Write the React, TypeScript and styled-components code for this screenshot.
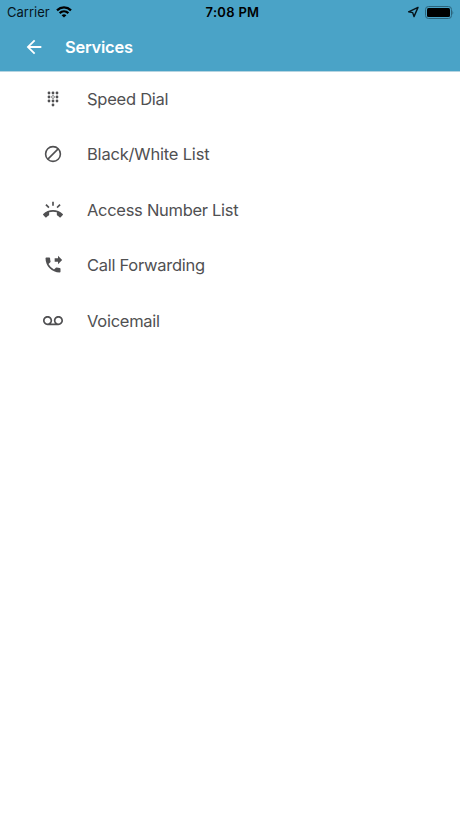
import React from 'react';
import styled, { createGlobalStyle } from 'styled-components';
import { MdArrowBack, MdRingVolume, MdPhoneForwarded, MdVoicemail } from 'react-icons/md';

const GlobalStyle = createGlobalStyle`
  * { box-sizing: border-box; }
  body { margin: 0; background: #fff; font-family: Inter, "Liberation Sans", sans-serif; }
`;

const Screen = styled.div`
  min-height: 100vh;
  background: #fff;
`;

const Header = styled.header`
  height: 71px;
  background: #4aa3c7;
  box-shadow: 0 1px 0 #b5d4e1;
`;

const StatusBar = styled.div`
  height: 24px;
  display: grid;
  grid-template-columns: 1fr auto 1fr;
  align-items: center;
  padding: 0 6px 0 7px;
  color: #06141b;
  font-size: 13px;
  line-height: 24px;
`;

const StatusGroup = styled.div<{ $end?: boolean }>`
  display: flex;
  align-items: center;
  gap: 6px;
  justify-content: ${p => (p.$end ? 'flex-end' : 'flex-start')};
  svg { display: block; }
`;

const Carrier = styled.span`
  letter-spacing: 0;
`;

const Clock = styled.span`
  padding-left: 4px;
  color: #000;
  font-weight: 600;
  letter-spacing: 0.3px;
`;

const TitleBar = styled.div`
  height: 46px;
  display: flex;
  align-items: center;
  padding-left: 23px;
  color: #fff;
`;

const BackButton = styled.button`
  display: flex;
  padding: 0;
  border: 0;
  background: none;
  color: inherit;
`;

const Title = styled.h1`
  margin: 0 0 0 20px;
  font-size: 16.5px;
  font-weight: 600;
  letter-spacing: -0.25px;
`;

const List = styled.ul`
  margin: 0;
  padding: 0;
  list-style: none;
`;

const Row = styled.li`
  height: 55.5px;
  display: flex;
  align-items: center;
  padding-left: 43px;
  color: #505052;
`;

const IconBox = styled.span`
  width: 20px;
  height: 20px;
  flex: none;
  display: flex;
  align-items: center;
  margin-right: 24px;
  svg { display: block; }
`;

const Label = styled.span<{ $spacing: number }>`
  font-size: 16.5px;
  line-height: 22px;
  letter-spacing: ${p => p.$spacing}px;
`;

const WifiIcon = () => (
  <svg width="16" height="12" viewBox="0 0 16 12" fill="none" stroke="#000" strokeWidth="2.3">
    <path d="M1 4.3C5 .5 11 .5 15 4.3" />
    <path d="M3.6 7.1C6.2 4.7 9.8 4.7 12.4 7.1" />
    <path d="M8 11.6L5.6 9.2Q8 7.2 10.4 9.2Z" fill="#000" stroke="none" />
  </svg>
);

const LocationIcon = () => (
  <svg width="12" height="12" viewBox="0 0 12 12" fill="none" stroke="currentColor" strokeWidth="1.4" strokeLinejoin="round">
    <path d="M11 1.4L1.6 5.8L5.7 6.6L7 10.6Z" />
  </svg>
);

const BatteryIcon = () => (
  <svg width="29" height="13" viewBox="0 0 29 13">
    <rect x=".5" y=".5" width="26" height="12" rx="3" fill="none" stroke="#2b637b" />
    <rect x="2" y="2" width="23" height="9" rx="1.5" fill="#000" />
    <path d="M27.5 4.2Q29 6.5 27.5 8.8Z" fill="#2b637b" />
  </svg>
);

const SpeedDialIcon = () => (
  <svg width="20" height="20" viewBox="0 0 20 20" fill="currentColor">
    {[4, 8, 12].flatMap(y => [6, 10, 14].map(x =>
      x === 10 && y === 8
        ? <circle key={`${x}-${y}`} cx={x} cy={y} r="1.4" fill="none" stroke="currentColor" strokeWidth=".7" />
        : <circle key={`${x}-${y}`} cx={x} cy={y} r="1.4" />
    ))}
    <circle cx="10" cy="16" r="1.4" />
  </svg>
);

const BlockIcon = () => (
  <svg width="20" height="20" viewBox="0 0 20 20" fill="none" stroke="currentColor" strokeWidth="1.6">
    <circle cx="10" cy="10" r="7.4" />
    <path d="M4.9 15.1L15.1 4.9" />
  </svg>
);

const services = [
  { label: 'Speed Dial', icon: <SpeedDialIcon />, spacing: -0.25 },
  { label: 'Black/White List', icon: <BlockIcon />, spacing: -0.19 },
  { label: 'Access Number List', icon: <MdRingVolume size={20} />, spacing: -0.29 },
  { label: 'Call Forwarding', icon: <MdPhoneForwarded size={20} />, spacing: -0.28 },
  { label: 'Voicemail', icon: <MdVoicemail size={20} />, spacing: -0.27 },
];

export default function App() {
  return (
    <Screen>
      <GlobalStyle />
      <Header>
        <StatusBar>
          <StatusGroup><Carrier>Carrier</Carrier><WifiIcon /></StatusGroup>
          <Clock>7:08 PM</Clock>
          <StatusGroup $end><LocationIcon /><BatteryIcon /></StatusGroup>
        </StatusBar>
        <TitleBar>
          <BackButton aria-label="Back"><MdArrowBack size={22} /></BackButton>
          <Title>Services</Title>
        </TitleBar>
      </Header>
      <List>
        {services.map(s => (
          <Row key={s.label}>
            <IconBox>{s.icon}</IconBox>
            <Label $spacing={s.spacing}>{s.label}</Label>
          </Row>
        ))}
      </List>
    </Screen>
  );
}
